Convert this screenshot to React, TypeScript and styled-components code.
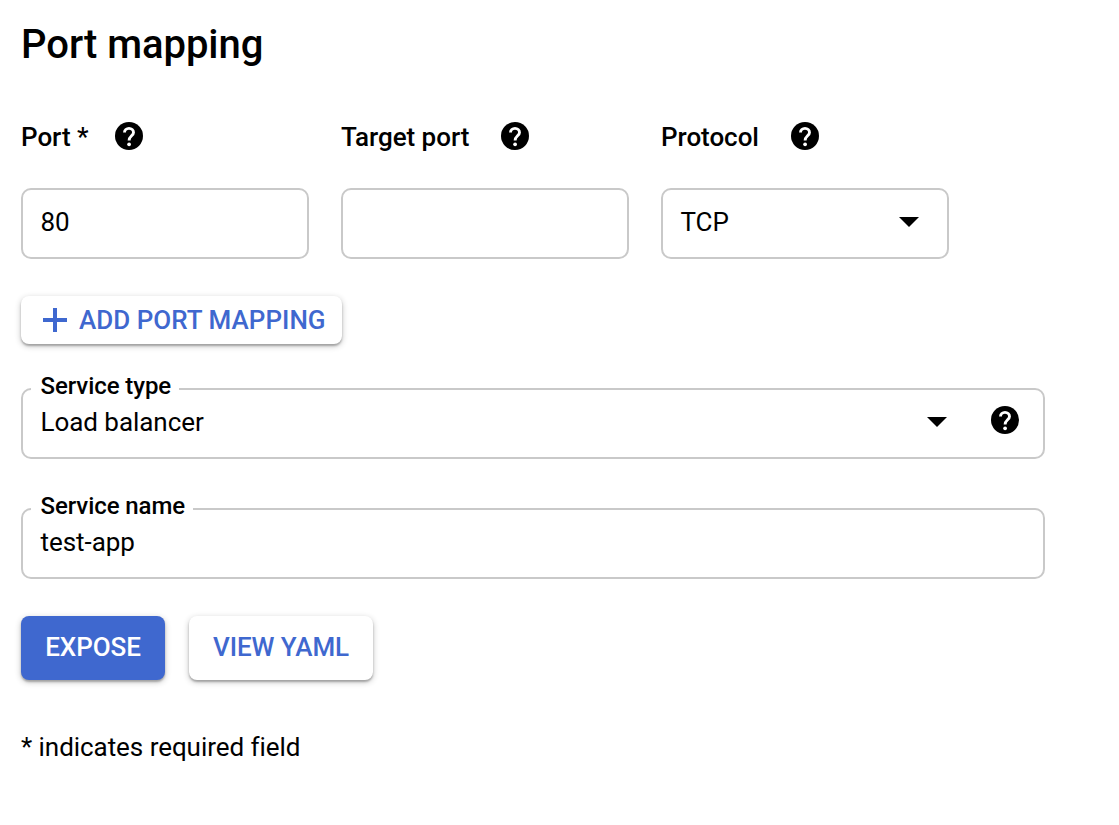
import React from 'react';
import styled, { createGlobalStyle } from 'styled-components';

const BLUE = '#3f68cf';

const GlobalStyle = createGlobalStyle`
  *, *::before, *::after { box-sizing: border-box; }
  body {
    margin: 0;
    background: #fff;
    color: #000;
    font: 400 26px/32px Roboto, sans-serif;
    -webkit-font-smoothing: antialiased;
  }
`;

const Page = styled.form`
  display: flex;
  flex-direction: column;
  align-items: flex-start;
  width: 1045px;
  padding: 21px 0 0 21px;
`;

const Title = styled.h1`
  margin: 0;
  font-size: 40px;
  font-weight: 500;
  line-height: 48px;
  letter-spacing: -0.04px;
`;

const PortRow = styled.div`
  display: flex;
  gap: 32px;
  margin-top: 51px;
`;

const PortColumn = styled.div`
  display: flex;
  flex-direction: column;
  gap: 36px;
  width: 288px;
`;

const ColumnLabel = styled.label<{ $gap: number }>`
  display: flex;
  align-items: center;
  gap: ${({ $gap }) => $gap}px;
  height: 32px;
  font-weight: 500;
`;

const LabelText = styled.span`
  padding-top: 2px;
  letter-spacing: -0.04px;
`;

const Field = styled.div`
  position: relative;
  display: flex;
  align-items: center;
  width: 100%;
  height: 71px;
  padding: 0 28px 3px 17.5px;
  border: 2px solid #c9c9c9;
  border-radius: 10px;
`;

const FieldValue = styled.span`
  flex: 1;
  letter-spacing: -0.05px;
`;

const FloatingLabel = styled.span`
  position: absolute;
  top: -19px;
  left: 8px;
  padding: 0 8px 0 9.5px;
  background: #fff;
  font-size: 24px;
  font-weight: 500;
  line-height: 30px;
  letter-spacing: -0.08px;
`;

const NamedField = styled(Field)<{ $top: number }>`
  margin-top: ${({ $top }) => $top}px;
  padding-right: 24px;
`;

const HelpGlyph = styled.svg`
  display: block;
  flex: none;
  width: 28px;
  height: 28px;
`;

const FieldHelp = styled.span`
  margin-left: 44px;
  padding-bottom: 4px;
`;

const Caret = styled.svg`
  display: block;
  flex: none;
  width: 20px;
  height: 10px;
`;

const Button = styled.button<{ $primary?: boolean }>`
  display: flex;
  align-items: center;
  justify-content: center;
  height: 64px;
  padding: 0 24px 2px;
  border: 0;
  border-radius: 8px;
  background: ${({ $primary }) => ($primary ? BLUE : '#fff')};
  color: ${({ $primary }) => ($primary ? '#fff' : BLUE)};
  font: 500 26px/32px Roboto, sans-serif;
  letter-spacing: -0.06px;
  white-space: nowrap;
  box-shadow: 0 2px 2px rgba(0, 0, 0, 0.24), 0 2px 6px rgba(0, 0, 0, 0.24);
`;

const AddButton = styled(Button)`
  justify-content: flex-start;
  gap: 12px;
  width: 321px;
  height: 48px;
  margin-top: 37px;
  padding: 0 0 0 22px;
  letter-spacing: 0.02px;
`;

const Actions = styled.div`
  display: flex;
  gap: 24px;
  margin-top: 37px;
`;

const ExposeButton = styled(Button)`
  width: 144px;
`;

const YamlButton = styled(Button)`
  width: 184px;
`;

const Note = styled.p`
  margin: 51px 0 0;
  letter-spacing: -0.05px;
`;

const HelpIcon = () => (
  <HelpGlyph viewBox="0 0 28 28" aria-label="Help">
    <circle cx="14" cy="14" r="14" />
    <path
      d="M9.5 10.4a4.5 4 0 0 1 9 0c0 3.4-4.4 3.6-4.4 8.2"
      fill="none"
      stroke="#fff"
      strokeWidth="2.9"
    />
    <circle cx="14.1" cy="22.3" r="1.9" fill="#fff" />
  </HelpGlyph>
);

const CaretIcon = () => (
  <Caret viewBox="0 0 20 10">
    <path d="M0 0h20L10 10z" />
  </Caret>
);

const PlusIcon = () => (
  <svg width="24" height="24" viewBox="0 0 24 24" fill={BLUE}>
    <path d="M10 0h4v10h10v4H14v10h-4V14H0v-4h10z" />
  </svg>
);

export default function App() {
  return (
    <>
      <GlobalStyle />
      <Page>
        <Title>Port mapping</Title>
        <PortRow>
          <PortColumn>
            <ColumnLabel $gap={26.5}>
              <LabelText>Port *</LabelText>
              <HelpIcon />
            </ColumnLabel>
            <Field>
              <FieldValue>80</FieldValue>
            </Field>
          </PortColumn>
          <PortColumn>
            <ColumnLabel $gap={32}>
              <LabelText>Target port</LabelText>
              <HelpIcon />
            </ColumnLabel>
            <Field />
          </PortColumn>
          <PortColumn>
            <ColumnLabel $gap={32.5}>
              <LabelText>Protocol</LabelText>
              <HelpIcon />
            </ColumnLabel>
            <Field>
              <FieldValue>TCP</FieldValue>
              <CaretIcon />
            </Field>
          </PortColumn>
        </PortRow>
        <AddButton type="button">
          <PlusIcon />
          <span>ADD PORT MAPPING</span>
        </AddButton>
        <NamedField $top={44}>
          <FloatingLabel>Service type</FloatingLabel>
          <FieldValue>Load balancer</FieldValue>
          <CaretIcon />
          <FieldHelp>
            <HelpIcon />
          </FieldHelp>
        </NamedField>
        <NamedField $top={49}>
          <FloatingLabel>Service name</FloatingLabel>
          <FieldValue>test-app</FieldValue>
        </NamedField>
        <Actions>
          <ExposeButton type="button" $primary>EXPOSE</ExposeButton>
          <YamlButton type="button">VIEW YAML</YamlButton>
        </Actions>
        <Note>* indicates required field</Note>
      </Page>
    </>
  );
}
